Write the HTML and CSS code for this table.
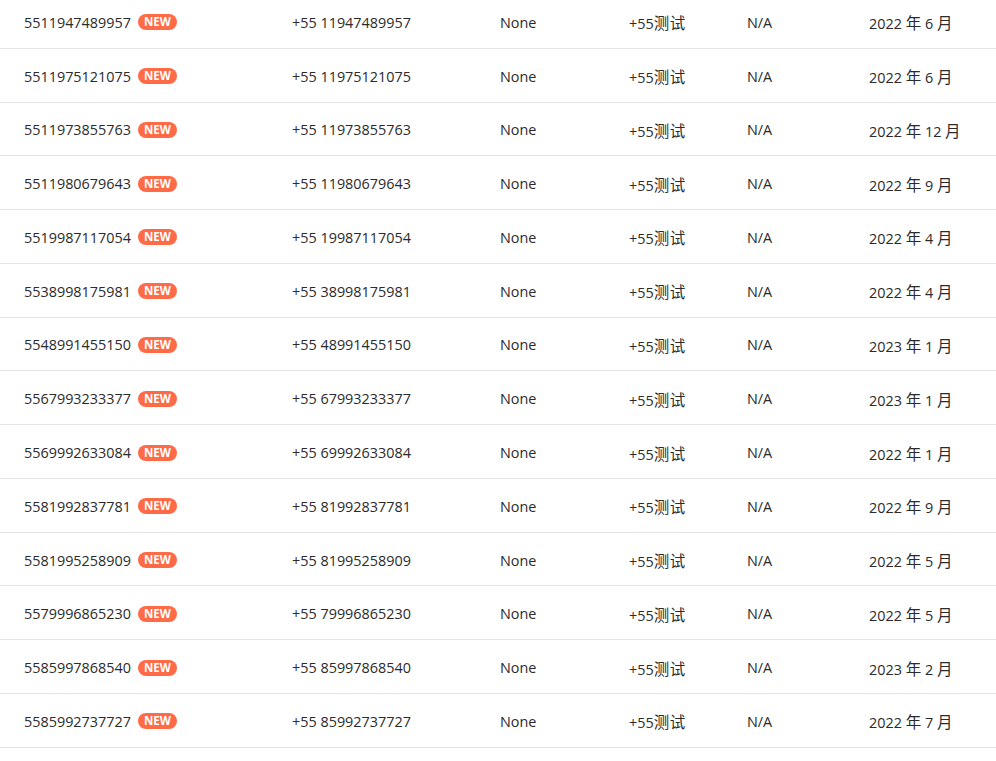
FILE: index.html
```html
<!DOCTYPE html>
<html>
<head>
<meta charset="utf-8">
<link rel="stylesheet" href="styles.css">
</head>
<body>
<div class="list">
  <div class="row"><div class="c1">5511947489957<span class="badge">NEW</span></div><div class="c2">+55 11947489957</div><div class="c3">None</div><div class="c4">+55<span class="cjk">测试</span></div><div class="c5">N/A</div><div class="c6">2022 <span class="cjk-d">年</span> 6 <span class="cjk-d">月</span></div></div>
  <div class="row"><div class="c1">5511975121075<span class="badge">NEW</span></div><div class="c2">+55 11975121075</div><div class="c3">None</div><div class="c4">+55<span class="cjk">测试</span></div><div class="c5">N/A</div><div class="c6">2022 <span class="cjk-d">年</span> 6 <span class="cjk-d">月</span></div></div>
  <div class="row"><div class="c1">5511973855763<span class="badge">NEW</span></div><div class="c2">+55 11973855763</div><div class="c3">None</div><div class="c4">+55<span class="cjk">测试</span></div><div class="c5">N/A</div><div class="c6">2022 <span class="cjk-d">年</span> 12 <span class="cjk-d">月</span></div></div>
  <div class="row"><div class="c1">5511980679643<span class="badge">NEW</span></div><div class="c2">+55 11980679643</div><div class="c3">None</div><div class="c4">+55<span class="cjk">测试</span></div><div class="c5">N/A</div><div class="c6">2022 <span class="cjk-d">年</span> 9 <span class="cjk-d">月</span></div></div>
  <div class="row"><div class="c1">5519987117054<span class="badge">NEW</span></div><div class="c2">+55 19987117054</div><div class="c3">None</div><div class="c4">+55<span class="cjk">测试</span></div><div class="c5">N/A</div><div class="c6">2022 <span class="cjk-d">年</span> 4 <span class="cjk-d">月</span></div></div>
  <div class="row"><div class="c1">5538998175981<span class="badge">NEW</span></div><div class="c2">+55 38998175981</div><div class="c3">None</div><div class="c4">+55<span class="cjk">测试</span></div><div class="c5">N/A</div><div class="c6">2022 <span class="cjk-d">年</span> 4 <span class="cjk-d">月</span></div></div>
  <div class="row"><div class="c1">5548991455150<span class="badge">NEW</span></div><div class="c2">+55 48991455150</div><div class="c3">None</div><div class="c4">+55<span class="cjk">测试</span></div><div class="c5">N/A</div><div class="c6">2023 <span class="cjk-d">年</span> 1 <span class="cjk-d">月</span></div></div>
  <div class="row"><div class="c1">5567993233377<span class="badge">NEW</span></div><div class="c2">+55 67993233377</div><div class="c3">None</div><div class="c4">+55<span class="cjk">测试</span></div><div class="c5">N/A</div><div class="c6">2023 <span class="cjk-d">年</span> 1 <span class="cjk-d">月</span></div></div>
  <div class="row"><div class="c1">5569992633084<span class="badge">NEW</span></div><div class="c2">+55 69992633084</div><div class="c3">None</div><div class="c4">+55<span class="cjk">测试</span></div><div class="c5">N/A</div><div class="c6">2022 <span class="cjk-d">年</span> 1 <span class="cjk-d">月</span></div></div>
  <div class="row"><div class="c1">5581992837781<span class="badge">NEW</span></div><div class="c2">+55 81992837781</div><div class="c3">None</div><div class="c4">+55<span class="cjk">测试</span></div><div class="c5">N/A</div><div class="c6">2022 <span class="cjk-d">年</span> 9 <span class="cjk-d">月</span></div></div>
  <div class="row"><div class="c1">5581995258909<span class="badge">NEW</span></div><div class="c2">+55 81995258909</div><div class="c3">None</div><div class="c4">+55<span class="cjk">测试</span></div><div class="c5">N/A</div><div class="c6">2022 <span class="cjk-d">年</span> 5 <span class="cjk-d">月</span></div></div>
  <div class="row"><div class="c1">5579996865230<span class="badge">NEW</span></div><div class="c2">+55 79996865230</div><div class="c3">None</div><div class="c4">+55<span class="cjk">测试</span></div><div class="c5">N/A</div><div class="c6">2022 <span class="cjk-d">年</span> 5 <span class="cjk-d">月</span></div></div>
  <div class="row"><div class="c1">5585997868540<span class="badge">NEW</span></div><div class="c2">+55 85997868540</div><div class="c3">None</div><div class="c4">+55<span class="cjk">测试</span></div><div class="c5">N/A</div><div class="c6">2023 <span class="cjk-d">年</span> 2 <span class="cjk-d">月</span></div></div>
  <div class="row"><div class="c1">5585992737727<span class="badge">NEW</span></div><div class="c2">+55 85992737727</div><div class="c3">None</div><div class="c4">+55<span class="cjk">测试</span></div><div class="c5">N/A</div><div class="c6">2022 <span class="cjk-d">年</span> 7 <span class="cjk-d">月</span></div></div>
</div>
</body>
</html>
```
FILE: styles.css
```css
html, body {
  margin: 0;
  padding: 0;
  background: #ffffff;
}
body {
  font-family: "Open Sans", "Noto Sans CJK SC", sans-serif;
  font-size: 14.4px;
  color: #2b2b2b;
  overflow: hidden;
}
.list {
  margin-top: -5px;
}
.row {
  display: grid;
  grid-template-columns: 292px 208px 129px 118px 122px 1fr;
  align-items: center;
  height: 53.77px;
  box-sizing: border-box;
  padding-top: 2px;
  border-bottom: 1px solid #e3e3e8;
}
.c1 {
  padding-left: 24px;
  display: flex;
  align-items: center;
}
.cjk {
  font-family: "Noto Sans CJK SC", sans-serif;
  font-size: 15.5px;
  letter-spacing: 0.5px;
}
.cjk-d {
  font-family: "Noto Sans CJK SC", sans-serif;
  font-size: 15.5px;
}
.badge {
  display: inline-block;
  margin-left: 7px;
  height: 16px;
  line-height: 16px;
  border-radius: 8px;
  background: #ff6a47;
  color: #ffffff;
  font-family: "Open Sans", sans-serif;
  font-weight: 700;
  font-size: 11.5px;
  width: 39px;
  text-align: center;
}
```
